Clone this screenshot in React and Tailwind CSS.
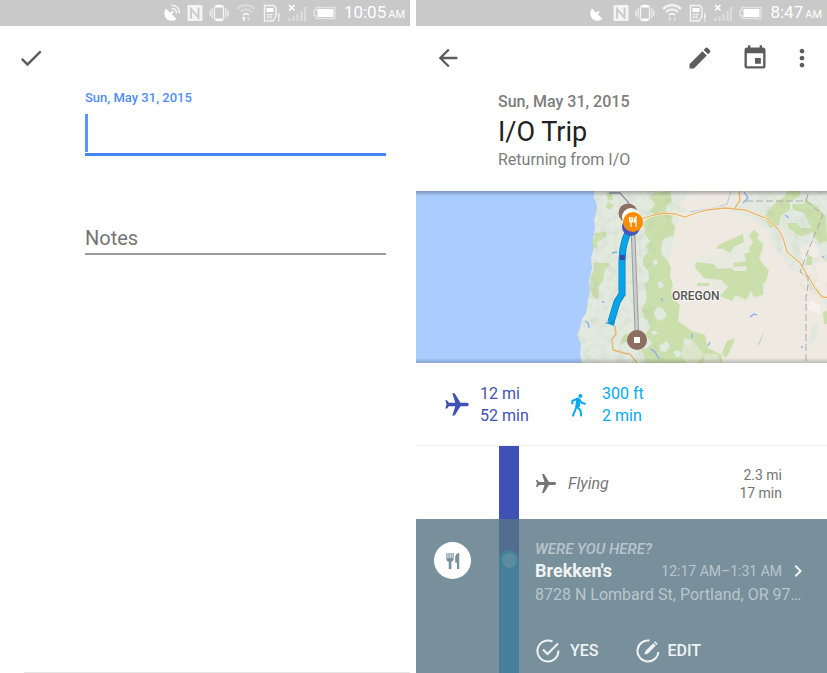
import React from "react";
import { MdCheck, MdArrowBack, MdEdit, MdEvent, MdMoreVert, MdFlight, MdChevronRight } from "react-icons/md";

function Satellite({ active }) {
  return (
    <svg className="h-[18px] w-[18px]" viewBox="0 0 18 18" fill="none" stroke="#fff" strokeWidth="1.6">
      <path d="M3 4.500 13.500 15C9.500 18 4.500 17 2.500 13.500 .8 10.500 1 7 3 4.500Z" fill="#fff" stroke="none" />
      <path d="m7 10.500 3-3" strokeWidth="2" />
      {active && <path d="M8.500 4.500c3 0 5 2 5 5M8.500 1.300c5 0 8 3.200 8 8" strokeOpacity=".8" />}
    </svg>
  );
}

function Nfc() {
  return (
    <svg className="h-[18px] w-4" viewBox="0 0 16 18">
      <rect x="0.500" y="1" width="15" height="16" rx="1" fill="#fff" fillOpacity=".8" />
      <path d="M4 14.500V5l7.500 8.500V3.500" fill="none" stroke="#c9c9c9" strokeWidth="1.800" />
    </svg>
  );
}

function Vibrate() {
  return (
    <svg className="h-[18px] w-5" viewBox="0 0 20 18" fill="none" stroke="#fff">
      <rect x="5.500" y="1.500" width="9" height="15" rx="2.500" strokeWidth="1.300" strokeOpacity=".8" />
      <path d="M7 2.500h6M7 15.500h6" strokeWidth="2" />
      <path d="M3.200 4v10M16.800 4v10M1.200 6v6M18.800 6v6" strokeWidth="1.700" strokeOpacity=".5" />
    </svg>
  );
}

function Wifi({ strong }) {
  return (
    <svg className="h-[18px] w-[22px]" viewBox="0 0 22 18" fill="none" stroke="#fff">
      <g strokeOpacity={strong ? 0.75 : 0.3} strokeWidth="2.400">
        <path d="M2 5c5-5 13-5 18 0" />
        <path d="M5 8c3.500-3.500 8.500-3.500 12 0" />
      </g>
      <path d="M8 11c2-1.600 4-1.600 6 0" strokeWidth="2" strokeOpacity=".75" />
      <path d="M8.500 12.500 6.500 14.500H8V17h1.500v-2.500H11Z" fill="#fff" stroke="none" fillOpacity={strong ? 0.4 : 1} />
      <path d="M13.500 17 11.700 15H13v-2h1.500v2h1.300Z" fill="#fff" stroke="none" fillOpacity=".4" />
    </svg>
  );
}

function Sim() {
  return (
    <svg className="h-[18px] w-[18px]" viewBox="0 0 18 18" fill="none" stroke="#fff">
      <path d="M1.500 1.500h9.500l2 2.500v8l-3 5H1.500Z" strokeWidth="1.400" strokeOpacity=".8" />
      <path d="M3.500 4h7v4h-7Z" fill="#fff" stroke="none" />
      <path d="M3.500 10.500h7M3.500 13h5M5 9.500v6M8 9.500v6" strokeOpacity=".6" />
      <path d="M15.800 9.500v5M15.800 15.500v1.800" strokeWidth="1.600" strokeOpacity=".8" />
    </svg>
  );
}

function Signal() {
  return (
    <svg className="h-[18px] w-5" viewBox="0 0 20 18" fill="none" stroke="#fff">
      <path d="m2 1 5.500 5.500M7.500 1 2 6.500" strokeWidth="1.700" />
      <path d="M2.500 17v-3M6.500 17v-4.500M10.500 17v-7M14.500 17V7M18 17V3" strokeWidth="2.400" strokeOpacity=".35" />
    </svg>
  );
}

function Battery() {
  return (
    <svg className="h-[18px] w-[23px]" viewBox="0 0 23 18">
      <path d="M1 6.500h2V3.500h19v11H3v-3H1Z" fill="none" stroke="#fff" strokeOpacity=".5" strokeWidth="1.300" />
      <rect x="4.500" y="5" width="16" height="8" rx=".5" fill="#fff" />
    </svg>
  );
}

function StatusBar({ time, active, strong }) {
  return (
    <div className="flex h-[26px] items-center justify-end gap-1.5 bg-[#c9c9c9] pr-[5px] text-white">
      <Satellite active={active} />
      <Nfc />
      <Vibrate />
      <Wifi strong={strong} />
      <Sim />
      <Signal />
      <Battery />
      <span className="ml-0.5 flex items-baseline gap-0.5 whitespace-nowrap text-[17px] leading-6">
        {time}
        <span className="text-[11px]">AM</span>
      </span>
    </div>
  );
}

function EntryForm() {
  return (
    <section className="flex min-w-0 flex-col bg-white">
      <StatusBar time="10:05" active />
      <div className="flex h-16 items-center px-[17px]">
        <button type="button" aria-label="Done" className="text-[#5c5c5c]">
          <MdCheck size={28} />
        </button>
      </div>
      <form className="flex flex-col pr-6 pl-[85px]">
        <label htmlFor="title" className="text-[13px] leading-4 font-medium text-[#4f8df8]">
          Sun, May 31, 2015
        </label>
        <div className="mt-2 flex h-[42px] border-b-[3px] border-[#4285f4]">
          <span className="h-[38px] w-[3px] bg-[#5c94f8]" />
          <input id="title" type="text" className="min-w-0 flex-1 text-xl outline-none" />
        </div>
        <input
          type="text"
          aria-label="Notes"
          placeholder="Notes"
          className="mt-[66px] h-[33px] w-full border-b-2 border-[#9b9b9b] text-xl outline-none placeholder:text-[#757575]"
        />
      </form>
      <div className="mt-auto ml-6 border-b border-[#e4e4e4]" />
    </section>
  );
}

function Fork({ className }) {
  return (
    <svg className={className} viewBox="0 0 18 20" fill="currentColor">
      <path d="M1.500 1h1.300v6h1V1h1.400v6h1V1h1.300v6h1V1h1.300v6.500c0 1.800-1 3-2.600 3.400V19H4.200v-8.100C2.500 10.500 1.500 9.300 1.500 7.500Z" />
      <path d="M16 1v18h-2.500v-7h-2V5.500C11.500 3 13.500 1 16 1Z" />
    </svg>
  );
}

function Walker() {
  return (
    <svg className="h-[23px] w-[15px]" viewBox="0 0 45 69" fill="none" stroke="currentColor" strokeWidth="6">
      <circle cx="28" cy="6" r="6" fill="currentColor" stroke="none" />
      <path d="M4 31V21L20 14l6 3 5 9 13 4" />
      <path d="M17 15h9l1 24-12-1Z" fill="currentColor" stroke="none" />
      <path d="M19 18 15 42 5 67M17 38l11 10 3 19" />
    </svg>
  );
}

function RouteMap() {
  return (
    <svg className="block h-auto w-full" viewBox="416 191 411 172" role="img" aria-label="Route through Oregon">
      <defs>
        <linearGradient id="edge" x1="0" y1="0" x2="0" y2="1">
          <stop offset="0" stopColor="#000" stopOpacity=".28" />
          <stop offset=".03" stopColor="#000" stopOpacity="0" />
          <stop offset=".97" stopColor="#000" stopOpacity="0" />
          <stop offset="1" stopColor="#000" stopOpacity=".2" />
        </linearGradient>
        <filter id="relief" x="0" y="0" width="1" height="1">
          <feTurbulence type="fractalNoise" baseFrequency=".11" numOctaves="3" seed="4" />
          <feColorMatrix values="0 0 0 0 .4  0 0 0 0 .45  0 0 0 0 .4  1.800 0 0 0 -.85" />
        </filter>
        <clipPath id="hills">
          <path d="M594 190 596 212 593 238 588 295 582 318 577 335 581 364H665L650 300 662 240 690 190Z" />
          <path d="M756 190h71v110l-24-10-25-40-18-30Z" />
        </clipPath>
      </defs>
      <rect x="416" y="190" width="411" height="174" fill="#aaccff" />
      <path d="M594 190 594 198 597 206 596 214 594 220 595 228 593 238 594 246 591 258 592 268 589 280 590 290 588 299 587 308 586 313 582 319 580 328 577 335 581 344 580 354 582 364H828V190Z" fill="#e2e9de" />
      <path d="M683 212 725 209 752 218 768 231 776 252 800 270 810 288 828 306V364H690L679 348 678 320 672 312 672 286 670 275 668 265 671 250 677 222Z" fill="#eeeae2" />
      <path d="M693 191 750 191 741 204 726 208 690 211 677 205Z" fill="#eeeae2" />
      <path d="M800 249 812 240 827 262V299L808 277Z" fill="#f1ece4" />
      <path d="M810 300 820 306 820 314 808 309Z" fill="#f6f3ee" />
      <path d="m692 262 7-8 18 4 13-14 22-10 14 6-5 22 8 14-8 22-24 4-22-8-12-18z" fill="#e5eade" opacity=".7" />
      <g fill="#cbdfac">
        <path d="m606 193 6-1 1 8-4 1zM608 202l6 3-4 5-4-3zM594 233l12-1 0 4-6 5-3 1 1 7-4-1-2-7 3-4zM594 263h16v3l-5 3-2 12-4 5-1 14-5-4-3-7 1-14 3-5zM621 339l5-6 4 3-2 5-7 3z" />
        <path d="M650 196 655 193 662 192 670 191 672 201 667 205 665 213 673 217 671 221 675 227 674 235 668 237 663 240 661 248 662 255 668 261 671 268 670 276 673 285 671 292 673 298 680 305 679 312 678 321 692 331 705 335 708 348 722 355 722 364 643 364 645 358 641 350 647 348 652 343 645 335 650 328 648 321 644 318 642 308 647 300 645 285 649 279 648 271 643 265 643 258 649 251 646 246 650 241 644 233 646 228 642 225 648 218 654 214 650 211 655 205Z" />
        <path d="m718 245 16-7 9-4 1 8-10 5-4 6-7-4-6 0zM749 235l5-5 5 4-2 5 6 5-1 7-3 6 3 6 7 8-3 10-3 3v11l-9 2-3-6-5 9-10-5-4 6-12-5 8-9-7-7-17-2-9-10 1-6 18 2 3 5 14-1 4 3h12l-1-5-13 1v-4l13-2-2-7 6-2-1-4 4-6zM697 283h12v3h-12zM722 353l5-12 8-3-2 6-5 11-3 3z" />
        <path d="m764 218 5-8 7-8 8-5 3-6h14l-2 6-9 4 0 8-9 7-2 8-9 4zM787 223l10 0 4 5 10 0-4-9-3-7-11-2-1-6 12 0 1-5 13 8 8 10 1 24-8 2-7-11-11 5-12-8zM808 254l5 4-2 7-6 0zM823 312l5-2v14h-4z" />
      </g>
      <g fill="#e2e9de">
        <path d="m654 312 4-5 5 2 4 6-5 6-6-2zM651 331h5l2 3-5 1zM660 345l7-4 3 5-4 6-6-1zM683 338l7 2 1 6-6-1zM673 352l5-2 4 4-5 4zM657 283l4-2 3 5-4 3zM652 262l4-3 2 4-4 3z" />
      </g>
      <path d="m685 339 8 1 11 15-8 9h-9l-6-9zM705 354h12l3 10h-17Z" fill="#e5e8dd" opacity=".65" />
      <g clipPath="url(#hills)" opacity=".3"><rect x="570" y="190" width="260" height="174" filter="url(#relief)" /></g>
      <path d="M757 347 765 329 760 343Z" fill="#bfcbc0" />
      <path d="M811 328 818 321 817 338 809 345Z" fill="#e0e8dc" />
      <g fill="none" stroke="#83aef0" strokeWidth="1.300">
        <path d="m612 253 5-1M602 301l2 2M585 321l3 2 1 5M651 349l4 3 4 7M661 298l2 3M750 317l4-3 3 1M692 334v4M708 346l2-4M801 347h2M822 257h2M785 215l4 3M744 192l4 6-5 5" />
        <path d="M690 212 715 208 727 204 731 191" strokeOpacity=".4" />
      </g>
      <path d="m638 220 16-5 9-2 12 1 10 3 8-3 14-4 18-2 20 2 23 9 10 10 5 9 4 14 13 11 15 25 7 9 14 1" fill="none" stroke="#fff4dc" strokeWidth="2.400" />
      <g fill="none" stroke="#e4b56d" strokeWidth="1.300">
        <path d="m638 220 16-5 9-2 12 1 10 3 8-3 14-4 18-2 20 2 23 9 10 10 5 9 4 14 13 11 15 25 7 9 14 1" />
        <path d="m735 208 5-8-1-9M615 326l1 8-4 5 1 11 11 3 6 1 7 9" />
      </g>
      <path d="m609 193 11 0 8 9 4 6" fill="none" stroke="#8e91a4" strokeWidth="1.300" />
      <g fill="none" stroke="#aaa" strokeWidth="1" strokeDasharray="7 3">
        <path d="M746 201h60l3-10" />
        <path d="m806 201 17 14-13 31-10 26 8 5v8l-2 12v68" />
      </g>
      <text x="672" y="300" fontFamily="Roboto, sans-serif" fontSize="12" fontWeight="500" fill="#555" stroke="#fff" strokeOpacity=".65" strokeWidth="2" paintOrder="stroke">OREGON</text>
      <path d="m633 232 4 105" stroke="#9c9c9c" strokeWidth="4.500" />
      <path d="m633 232 4 105" stroke="#cecece" strokeWidth="2.500" />
      <path d="M630 229q-5 8-7 20l-1 11v34l-5 8-6 20" fill="none" stroke="#087eb5" strokeWidth="7" />
      <path d="M630 229q-5 8-7 20l-1 11v34l-5 8-6 20" fill="none" stroke="#08a4eb" strokeWidth="5.500" />
      <path d="m605 323 10-3-1 6-5-2Z" fill="#0797d7" />
      <path d="M620 255h5v5h-5z" fill="#3949ab" />
      <circle cx="628" cy="213" r="9.500" fill="#8d6e63" />
      <circle cx="631" cy="217" r="9" fill="#fff" />
      <circle cx="631" cy="227" r="9" fill="#4658bd" />
      <circle cx="633" cy="222" r="10" fill="#fb8c00" />
      <g fill="none" stroke="#fff" strokeWidth="1.200">
        <path d="M629.500 217v3.500q0 2 1.500 2t1.500-2V217M631 217v10" />
        <path d="M636 227v-10q-2 1-2 5h2" fill="#fff" />
      </g>
      <circle cx="637" cy="340" r="10" fill="#8d6e63" />
      <path d="M634 337h6v6h-6z" fill="#fff" />
      <rect x="416" y="191" width="411" height="172" fill="url(#edge)" />
    </svg>
  );
}

function ConfirmIcon({ edit }) {
  return (
    <svg className="h-6 w-6" viewBox="0 0 24 24" fill="none" stroke="currentColor" strokeWidth="2">
      <path d={edit ? "M13.500 1.600A10.500 10.500 0 1 0 22.400 13" : "M16.500 2.500A10.500 10.500 0 1 0 22.400 11.500"} />
      {edit ? (
        <path d="m8.500 15.500.7-3.200 8-8 2.500 2.500-8 8ZM18 3.500l1.200-1.200 2.500 2.500L20.500 6Z" fill="currentColor" stroke="none" />
      ) : (
        <path d="m7 10.500 4.500 4.500L22 4.500" />
      )}
    </svg>
  );
}

function TripDetail() {
  return (
    <section className="flex min-w-0 flex-col bg-white">
      <StatusBar time="8:47" strong />
      <header className="flex h-16 items-center pr-[11px] pl-[18px] text-[#5c5c5c]">
        <button type="button" aria-label="Back"><MdArrowBack size={28} /></button>
        <div className="ml-auto flex items-center gap-[27px]">
          <button type="button" aria-label="Edit trip"><MdEdit size={28} /></button>
          <button type="button" aria-label="Open calendar"><MdEvent size={28} /></button>
          <button type="button" aria-label="More options" className="-ml-2"><MdMoreVert size={28} /></button>
        </div>
      </header>
      <div className="flex h-[101px] flex-col pt-0.5 pl-[82px]">
        <p className="text-base leading-5 font-medium text-[#7d7d7d]">Sun, May 31, 2015</p>
        <h1 className="text-[27px] leading-10 text-[#212121]">I/O Trip</h1>
        <p className="text-base leading-4 text-[#7d7d7d]">Returning from I/O</p>
      </div>
      <RouteMap />
      <div className="flex h-[83px] items-center border-b border-[#eeeeee] pt-0.5 pl-[27px] text-base leading-[22px]">
        <div className="flex w-[128px] items-center gap-[9px] text-[#3f51b5]">
          <MdFlight size={28} className="rotate-90" />
          <p>12 mi<br />52 min</p>
        </div>
        <div className="flex items-center gap-4 text-[#03a9f4]">
          <Walker />
          <p>300 ft<br />2 min</p>
        </div>
      </div>
      <div className="flex h-[73px] pr-[45px] pl-[83px] text-[#757575]">
        <div className="w-5 bg-[#3f51b5]" />
        <div className="flex flex-1 items-center gap-2.5 pt-0.5 pl-[15px]">
          <MdFlight size={24} className="rotate-90" />
          <span className="text-base italic">Flying</span>
          <p className="ml-auto text-right text-sm leading-[18px]">2.3 mi<br />17 min</p>
        </div>
      </div>
      <div className="flex h-[154px] bg-[#78909c] text-[#f0f3f4]">
        <div className="w-[83px] pt-[23px] pl-[18px]">
          <div className="flex size-[37px] items-center justify-center rounded-full bg-white text-[#78909c]">
            <Fork className="h-5 w-4" />
          </div>
        </div>
        <div className="flex w-5 flex-col bg-[#526d8d] pt-[31px]">
          <div className="flex flex-1 justify-center rounded-t-full bg-[#457f9b] pt-[3px]">
            <span className="size-[15px] rounded-full bg-[#5a8c9e]" />
          </div>
        </div>
        <div className="min-w-0 flex-1 pt-5 pl-4">
          <p className="text-[15px] leading-5 font-medium text-[#b9c6cc] italic">WERE YOU HERE?</p>
          <div className="flex items-center pr-[17px] leading-6">
            <strong className="text-lg leading-6 font-bold">Brekken's</strong>
            <span className="ml-auto text-sm text-[#b9c6cc]">12:17 AM–1:31 AM</span>
            <button type="button" aria-label="Place details" className="ml-1"><MdChevronRight size={24} /></button>
          </div>
          <p className="whitespace-nowrap text-base leading-6 text-[#b9c6cc]">8728 N Lombard St, Portland, OR 97…</p>
          <div className="mt-8 flex gap-[37px] pl-px text-base leading-6 font-medium">
            <button type="button" className="flex items-center gap-2.5"><ConfirmIcon />YES</button>
            <button type="button" className="flex items-center gap-2"><ConfirmIcon edit />EDIT</button>
          </div>
        </div>
      </div>
    </section>
  );
}

export default function App() {
  return (
    <main className="grid min-h-screen grid-cols-[410fr_411fr] gap-1.5 bg-white font-['Roboto',sans-serif]">
      <EntryForm />
      <TripDetail />
    </main>
  );
}
